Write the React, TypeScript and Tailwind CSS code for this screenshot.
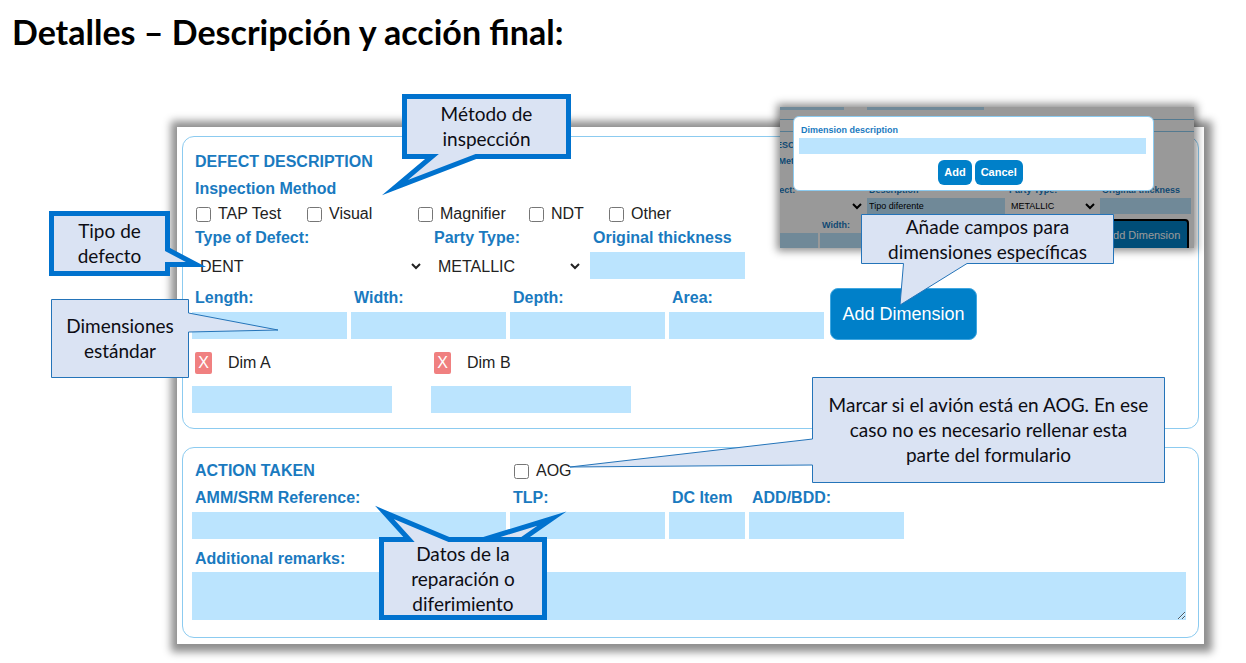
import type { ReactNode } from "react";

const label = "block pl-[3px] text-base/6 font-bold text-[#1a7abf]";
const field = "block h-[27px] w-full bg-[#bbe4fe] px-1 text-base outline-none";
const small = "block pl-[2px] text-[9px]/4 font-bold text-[#1a7abf]";
const smallField = "block h-4 w-full bg-[#bbe4fe] px-[2px] text-[9px] outline-none";

function Field({ id, text, width }: { id: string; text: string; width: string }) {
  return (
    <div className={width}>
      <label htmlFor={id} className={label}>{text}</label>
      <input id={id} type="text" className={`mt-[2px] ${field}`} />
    </div>
  );
}

function Check({ text, width }: { text: string; width: string }) {
  return (
    <label className={`flex items-center gap-[7px] text-base/6 text-[#222] ${width}`}>
      <input type="checkbox" className="size-[15px]" />
      <span>{text}</span>
    </label>
  );
}

function Dimension({ name }: { name: string }) {
  const id = `dim-${name}`;
  return (
    <div className="w-[235px]">
      <div className="flex items-center gap-4 pl-[3px]">
        <button type="button" aria-label={`Remove ${name}`} className="h-[22px] w-[17px] rounded-xs bg-[#f08080] text-base/5 text-white">X</button>
        <label htmlFor={id} className="text-base/6 text-[#222]">{name}</label>
      </div>
      <input id={id} type="text" className="mt-[11px] block h-[27px] w-[200px] bg-[#bbe4fe] px-1 outline-none" />
    </div>
  );
}

/* A speech bubble: outline and tail are drawn, the text sits centred in the box. */
function Callout({ place, points, extra, bold, children }: { place: string; points: string; extra?: string; bold?: boolean; children: ReactNode }) {
  return (
    <div className={`absolute flex items-center justify-center pb-px text-center font-['Lato',sans-serif] text-[19px]/[25px] text-[#0d0d14] ${place}`}>
      <svg className="absolute top-0 left-0 size-full overflow-visible" aria-hidden="true" fill="#dae3f3" stroke={bold ? "#0072ce" : "#2474b9"} strokeWidth={bold ? 5 : 1} strokeMiterlimit={20}>
        {extra && <polygon points={extra} />}
        <polygon points={points} />
      </svg>
      <p className="relative">{children}</p>
    </div>
  );
}

function DimensionDialog() {
  return (
    <section className="absolute top-[107px] left-[780px] h-[141px] w-[414px] bg-white shadow-[0_0_8px_3px_rgba(0,0,0,0.45)]">
      <div className="h-full overflow-hidden">
        <div className="flex gap-[23px]">
          <div className="h-[3px] w-16 bg-[#bbe4fe]" />
          <div className="h-[3px] w-[117px] bg-[#bbe4fe]" />
        </div>
        <div className="h-[10px] border-b border-[#8ccbf0]" />
        <div className="mt-[11px] border-t border-[#8ccbf0] pt-[5px]">
          <div className="-ml-[51px]">
            <h3 className={small}>DEFECT DESCRIPTION</h3>
            <h4 className={small}>Inspection Method</h4>
            <div className="mt-[13px] flex gap-[2px]">
              <div className="w-[136px]">
                <label htmlFor="s-defect" className={small}>Type of Defect:</label>
                <select id="s-defect" className="block h-4 w-full text-[9px]"><option>OTHER</option></select>
              </div>
              <div className="w-[138px]">
                <label htmlFor="s-desc" className={small}>Description</label>
                <input id="s-desc" type="text" defaultValue="Tipo diferente" className={smallField} />
              </div>
              <div className="w-[91px]">
                <label htmlFor="s-party" className={small}>Party Type:</label>
                <select id="s-party" className="block h-4 w-full text-[9px]"><option>METALLIC</option></select>
              </div>
              <div className="w-[91px]">
                <label htmlFor="s-thick" className={small}>Original thickness</label>
                <input id="s-thick" type="text" className={smallField} />
              </div>
            </div>
            <div className="mt-[3px] flex gap-[2px] pr-[5px]">
              <div className="w-[89px]">
                <label htmlFor="s-length" className={small}>Length:</label>
                <input id="s-length" type="text" className={smallField} />
              </div>
              <div className="w-[99px]">
                <label htmlFor="s-width" className={small}>Width:</label>
                <input id="s-width" type="text" className={smallField} />
              </div>
              <button type="button" className="mt-[2px] ml-auto h-8 w-[92px] rounded-sm border-2 border-black bg-[#0080c9] text-[11px] text-white">Add Dimension</button>
            </div>
          </div>
        </div>
      </div>
      <div className="absolute inset-0 bg-black/40" />
      <div role="dialog" aria-label="Dimension description" className="absolute top-[9px] left-[13px] h-[75px] w-[361px] rounded-md border border-[#8ccbf0] bg-white pt-[5px] pr-[7px] pl-[5px]">
        <label htmlFor="dim-desc" className={small}>Dimension description</label>
        <input id="dim-desc" type="text" className={smallField} />
        <div className="mt-[6px] flex justify-center gap-[3px] pl-4">
          <button type="button" className="h-[25px] rounded-md bg-[#0080c9] px-[6px] text-[11px] font-bold text-white">Add</button>
          <button type="button" className="h-[25px] rounded-md bg-[#0080c9] px-[6px] text-[11px] font-bold text-white">Cancel</button>
        </div>
      </div>
    </section>
  );
}

export default function App() {
  return (
    <main className="relative bg-white pb-5 font-['Liberation_Sans',Arial,sans-serif]">
      <h1 className="pt-[11px] pl-3 font-['Lato',sans-serif] text-[34px]/[42px] font-bold text-black">Detalles – Descripción y acción final:</h1>

      <form className="mt-[74px] mr-[42px] ml-[177px] bg-white px-[5px] pt-[9px] pb-[6px] shadow-[1px_1px_8px_7px_#8f8f8f]">
        <section className="rounded-xl border border-[#8ccbf0] pt-[13px] pr-3 pb-[15px] pl-[9px]">
          <h2 className={label}>DEFECT DESCRIPTION</h2>
          <fieldset className="pt-[3px]">
            <legend className={`float-left w-full ${label}`}>Inspection Method</legend>
            <div className="clear-both flex pt-px pl-1">
              <Check text="TAP Test" width="w-[111px]" />
              <Check text="Visual" width="w-[111px]" />
              <Check text="Magnifier" width="w-[111px]" />
              <Check text="NDT" width="w-20" />
              <Check text="Other" width="w-20" />
            </div>
          </fieldset>
          <div className="flex gap-1">
            <div className="w-[235px]">
              <label htmlFor="defect" className={label}>Type of Defect:</label>
              <select id="defect" className="mt-[2px] block h-7 w-[232px] pl-1 text-base text-[#222]"><option>DENT</option></select>
            </div>
            <div className="w-[155px]">
              <label htmlFor="party" className={label}>Party Type:</label>
              <select id="party" className="mt-[2px] block h-7 w-[152px] pl-[3px] text-base text-[#222]"><option>METALLIC</option></select>
            </div>
            <Field id="thickness" text="Original thickness" width="w-[155px]" />
          </div>
          <div className="mt-[6px] flex gap-1">
            <Field id="length" text="Length:" width="w-[155px]" />
            <Field id="width" text="Width:" width="w-[155px]" />
            <Field id="depth" text="Depth:" width="w-[155px]" />
            <Field id="area" text="Area:" width="w-[155px]" />
            <button type="button" className="mt-[2px] ml-[2px] h-[52px] w-[147px] rounded-lg border border-[#3fa6e0] bg-[#0080c9] text-[18px]/6 text-white">Add Dimension</button>
          </div>
          <div className="mt-[11px] flex gap-1">
            <Dimension name="Dim A" />
            <Dimension name="Dim B" />
          </div>
        </section>

        <section className="mt-[18px] rounded-xl border border-[#8ccbf0] pt-[11px] pr-3 pb-[17px] pl-[9px]">
          <div className="flex">
            <h2 className={`w-[322px] ${label}`}>ACTION TAKEN</h2>
            <Check text="AOG" width="w-20" />
          </div>
          <div className="mt-[3px] flex gap-1">
            <Field id="amm" text="AMM/SRM Reference:" width="w-[314px]" />
            <Field id="tlp" text="TLP:" width="w-[155px]" />
            <Field id="dc" text="DC Item" width="w-[76px]" />
            <Field id="add" text="ADD/BDD:" width="w-[155px]" />
          </div>
          <label htmlFor="remarks" className={`mt-2 ${label}`}>Additional remarks:</label>
          <textarea id="remarks" className="mt-px block h-12 w-full bg-[#bbe4fe] outline-none" />
        </section>
      </form>

      <DimensionDialog />

      <Callout bold place="top-[94px] left-[402px] h-[65px] w-[169px]" points="2.5,2.5 166.5,2.5 166.5,62.5 74,62.5 -7,93.5 30,62.5 2.5,62.5">
        Método de<br />inspección
      </Callout>
      <Callout bold place="top-[211px] left-[49px] h-[65px] w-[121px]" points="2.5,2.5 118.5,2.5 118.5,38.5 147,53.5 118.5,53.5 118.5,62.5 2.5,62.5">
        Tipo de<br />defecto
      </Callout>
      <Callout place="top-[299px] left-[51px] h-[79px] w-[138px]" points="0.5,0.5 137.5,0.5 137.5,14 227,31 137.5,33 137.5,78.5 0.5,78.5">
        Dimensiones<br />estándar
      </Callout>
      <Callout place="top-[214px] left-[861px] h-[50px] w-[253px]" points="0.5,0.5 252.5,0.5 252.5,49.5 106,49.5 39,91 42.5,49.5 0.5,49.5">
        Añade campos para<br />dimensiones específicas
      </Callout>
      <Callout place="top-[377px] left-[812px] h-[106px] w-[353px]" points="0.5,0.5 352.5,0.5 352.5,105.5 0.5,105.5 0.5,88 -242,90 0.5,62">
        Marcar si el avión está en AOG. En ese<br />caso no es necesario rellenar esta<br />parte del formulario
      </Callout>
      <Callout bold place="top-[537px] left-[379px] h-[83px] w-[168px]" extra="105,2.5 173,-18.5 143,2.5" points="2.5,2.5 30,2.5 5.5,-24.5 70,2.5 165.5,2.5 165.5,80.5 2.5,80.5">
        Datos de la<br />reparación o<br />diferimiento
      </Callout>
    </main>
  );
}
